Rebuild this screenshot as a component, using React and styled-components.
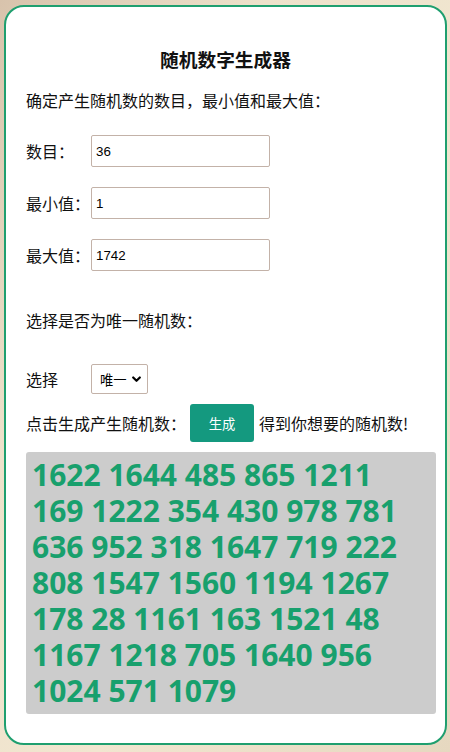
import React from "react";
import styled, { createGlobalStyle } from "styled-components";

const Global = createGlobalStyle`
  html, body { margin: 0; padding: 0; }
  body {
    width: 450px;
    min-height: 752px;
    background: linear-gradient(120deg, #d8c3ac 0%, #eee2cb 30%, #f1e6d0 60%, #e6d8c0 100%);
    font-family: "Noto Sans CJK SC", "Noto Sans", sans-serif;
    overflow: hidden;
  }
  #root { padding-top: 5px; }
`;

const Card = styled.div`
  box-sizing: border-box;
  width: 443px;
  margin: 0 3px 0 4px;
  border: 2px solid #1f9f6f;
  border-radius: 20px;
  background: #fff;
  padding: 40px 20px 29px 20px;
  display: flex;
  flex-direction: column;
  color: #111;
`;

const Title = styled.h3`
  margin: 0 0 17px;
  font-size: 18.72px;
  line-height: 24px;
  font-weight: 700;
  text-align: center;
`;

const Text = styled.p`
  margin: 0 0 ${(p) => p.$mb || 0}px;
  font-size: 16px;
  line-height: 24px;
`;

const Row = styled.div`
  display: flex;
  align-items: center;
  height: ${(p) => p.$h || 32}px;
  margin-bottom: ${(p) => p.$mb || 0}px;
  font-size: 16px;
`;

const Label = styled.span`
  width: 65px;
  flex: none;
  line-height: 24px;
`;

const Input = styled.input`
  box-sizing: border-box;
  width: 179px;
  height: 32px;
  border: 1px solid #c3b2a8;
  border-radius: 2px;
  padding: 0 4px;
  font-family: "Liberation Sans", Arial, sans-serif;
  font-size: 13.33px;
  color: #000;
  outline: none;
`;

const SelectWrap = styled.div`
  position: relative;
  width: 57px;
  height: 30px;
`;

const Select = styled.select`
  box-sizing: border-box;
  width: 57px;
  height: 30px;
  appearance: none;
  -webkit-appearance: none;
  border: 1px solid #c3b2a8;
  border-radius: 2px;
  background: #fff;
  padding: 0 0 0 8px;
  font-family: "Noto Sans CJK SC", sans-serif;
  font-size: 13.33px;
  color: #000;
  outline: none;
`;

const Chevron = styled.svg`
  position: absolute;
  right: 7px;
  top: 12px;
  pointer-events: none;
`;

const Button = styled.button`
  box-sizing: border-box;
  width: 64px;
  height: 38px;
  margin: 0 5px 0 4px;
  border: none;
  border-radius: 3px;
  background: #14997f;
  color: #fff;
  font-family: "Noto Sans CJK SC", sans-serif;
  font-size: 13.33px;
`;

const Result = styled.div`
  box-sizing: border-box;
  width: 410px;
  height: 262px;
  margin-top: 10px;
  background: #cccccc;
  border-radius: 3px;
  padding: 5px 6px;
  font-family: "Open Sans", "Noto Sans", sans-serif;
  font-weight: 700;
  font-size: 30px;
  line-height: 36px;
  color: #18a06d;
`;

const numbers = "1622 1644 485 865 1211 169 1222 354 430 978 781 636 952 318 1647 719 222 808 1547 1560 1194 1267 178 28 1161 163 1521 48 1167 1218 705 1640 956 1024 571 1079";

export default function App() {
  return (
    <>
      <Global />
      <Card>
        <Title>随机数字生成器</Title>
        <Text $mb={23}>确定产生随机数的数目，最小值和最大值：</Text>
        <Row $mb={20}>
          <Label>数目：</Label>
          <Input defaultValue="36" />
        </Row>
        <Row $mb={20}>
          <Label>最小值：</Label>
          <Input defaultValue="1" />
        </Row>
        <Row $mb={37}>
          <Label>最大值：</Label>
          <Input defaultValue="1742" />
        </Row>
        <Text $mb={32}>选择是否为唯一随机数：</Text>
        <Row $h={30} $mb={10}>
          <Label>选择</Label>
          <SelectWrap>
            <Select defaultValue="unique">
              <option value="unique">唯一</option>
              <option value="repeat">可重复</option>
            </Select>
            <Chevron width="9" height="7" viewBox="0 0 9 7">
              <path d="M1.2 1.5 L4.5 4.8 L7.8 1.5" fill="none" stroke="#000" strokeWidth="2.2" strokeLinecap="round" strokeLinejoin="round" />
            </Chevron>
          </SelectWrap>
        </Row>
        <Row $h={38}>
          <span>点击生成产生随机数：</span>
          <Button>生成</Button>
          <span>得到你想要的随机数!</span>
        </Row>
        <Result>{numbers}</Result>
      </Card>
    </>
  );
}
